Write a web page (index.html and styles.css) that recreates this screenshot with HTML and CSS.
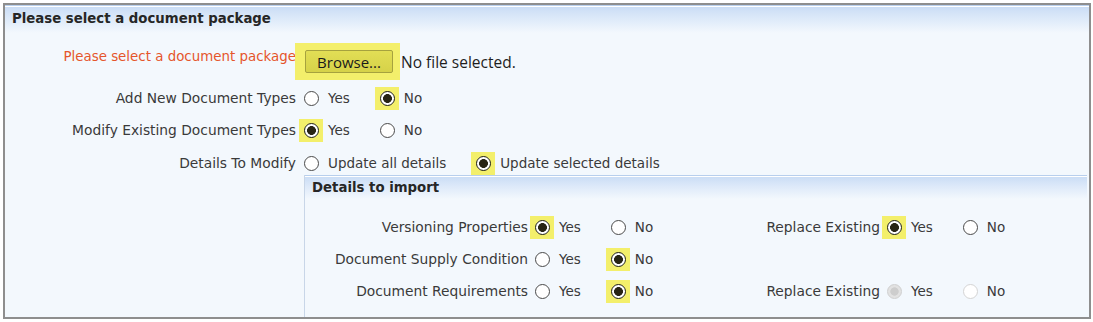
FILE: index.html
```html
<!DOCTYPE html>
<html>
<head>
<meta charset="utf-8">
<link rel="stylesheet" href="styles.css">
</head>
<body>
<div class="frame">
  <div class="hdr">Please select a document package</div>
  <div class="content">
    <div class="row row-file">
      <span class="lbl req">Please select a document package</span>
      <span class="hl hl-btn"><span class="browse">Browse...</span></span>
      <span class="nofile">No file selected.</span>
    </div>
    <div class="row r2">
      <span class="lbl">Add New Document Types</span>
      <span class="opt"><span class="radio"></span>Yes</span>
      <span class="opt"><span class="hl"><span class="radio on"></span></span>No</span>
    </div>
    <div class="row r3">
      <span class="lbl">Modify Existing Document Types</span>
      <span class="opt"><span class="hl"><span class="radio on"></span></span>Yes</span>
      <span class="opt"><span class="radio"></span>No</span>
    </div>
    <div class="row r4">
      <span class="lbl">Details To Modify</span>
      <span class="opt"><span class="radio"></span>Update all details</span>
      <span class="opt"><span class="hl"><span class="radio on"></span></span>Update selected details</span>
    </div>
    <div class="panel">
      <div class="phdr">Details to import</div>
      <div class="pbody">
        <div class="prow">
          <span class="plbl">Versioning Properties</span>
          <span class="popts">
            <span class="opt"><span class="hl"><span class="radio on"></span></span>Yes</span>
            <span class="opt"><span class="radio"></span>No</span>
          </span>
          <span class="plbl2">Replace Existing</span>
          <span class="opt"><span class="hl"><span class="radio on"></span></span>Yes</span>
          <span class="opt"><span class="radio"></span>No</span>
        </div>
        <div class="prow">
          <span class="plbl">Document Supply Condition</span>
          <span class="popts">
            <span class="opt"><span class="radio"></span>Yes</span>
            <span class="opt"><span class="hl"><span class="radio on"></span></span>No</span>
          </span>
        </div>
        <div class="prow">
          <span class="plbl">Document Requirements</span>
          <span class="popts">
            <span class="opt"><span class="radio"></span>Yes</span>
            <span class="opt"><span class="hl"><span class="radio on"></span></span>No</span>
          </span>
          <span class="plbl2">Replace Existing</span>
          <span class="opt"><span class="radio dis on"></span>Yes</span>
          <span class="opt"><span class="radio dis"></span>No</span>
        </div>
      </div>
    </div>
  </div>
</div>
</body>
</html>
```

FILE: styles.css
```css
html, body {
  margin: 0;
  padding: 0;
  background: #ffffff;
}
body {
  font-family: "DejaVu Sans", Verdana, sans-serif;
  font-size: 13.8px;
  color: #3a3a3a;
}
.frame {
  margin: 3px 0 0 3px;
  width: 1088px;
  height: 316px;
  box-sizing: border-box;
  border: 2px solid #8e8e8e;
  background: #f3f8fd;
  display: flex;
  flex-direction: column;
}
.hdr {
  height: 28px;
  box-sizing: border-box;
  border-top: 1px solid #b9d0ee;
  box-shadow: inset 0 1px 0 #ffffff;
  padding: 5px 0 0 7px;
  background: linear-gradient(to bottom, #c9dcf5 0%, #dce9f9 45%, #f3f8fd 100%);
  font-weight: bold;
  font-size: 13.3px;
  color: #262626;
}
.content {
  flex: 1;
  padding-top: 10px;
  display: flex;
  flex-direction: column;
}
.row {
  display: flex;
  align-items: center;
  height: 24px;
}
.row-file {
  height: 37px;
}
.r2 { margin-top: 6px; }
.r3 { margin-top: 8px; }
.r4 { margin-top: 9px; }
.lbl {
  width: 291px;
  flex: none;
  text-align: right;
  margin-right: 8px;
  white-space: nowrap;
}
.req {
  color: #e5552b;
  margin-right: 0;
  font-size: 13.4px;
  align-self: flex-start;
  padding-top: 6px;
}
.hl-btn {
  margin-left: -1px;
  height: 37px;
  padding: 7px 7px 7px 10px;
  box-sizing: border-box;
}
.hl {
  background: #f3ef6b;
  display: inline-flex;
  align-items: center;
}
.browse {
  display: inline-flex;
  align-items: center;
  justify-content: center;
  width: 88px;
  height: 23px;
  box-sizing: border-box;
  border: 1px solid #a6a23e;
  border-radius: 2px;
  background: linear-gradient(to bottom, #e2de55, #d6d249);
  font-family: "Open Sans", "Liberation Sans", sans-serif;
  font-size: 15px;
  color: #1a1a1a;
}
.nofile {
  margin-left: 1px;
  font-family: "Open Sans", "Liberation Sans", sans-serif;
  font-size: 15.5px;
  color: #1e1e1e;
}
.opt {
  display: inline-flex;
  align-items: center;
  margin-right: 30px;
  white-space: nowrap;
  font-size: 13.5px;
}
.opt .hl {
  margin: -5px 5px -5px -5px;
  padding: 4px 4px 4px 5px;
}
.radio {
  width: 15px;
  height: 15px;
  box-sizing: border-box;
  border: 1px solid #4a4a4a;
  border-radius: 50%;
  background: #ffffff;
  margin-right: 9px;
  flex: none;
}
.hl .radio {
  margin-right: 0;
}
.radio.on {
  border: 1.5px solid #1e1e1e;
  background: radial-gradient(circle, #272414 0 4.1px, #ffffff 4.7px);
}
.radio.dis {
  border: 1px solid #d4d4d4;
  background: #ffffff;
}
.radio.dis.on {
  border: 1px solid #cfcfcf;
  background: radial-gradient(circle, #cdcdcd 0 3.8px, #e2e2e2 4.5px);
}
.panel {
  margin: 0 2px 0 299px;
  flex: 1;
  border-left: 1px solid #c8d6e8;
  display: flex;
  flex-direction: column;
}
.phdr {
  height: 24px;
  box-sizing: border-box;
  border-top: 1px solid #b8cfed;
  box-shadow: inset 0 1px 0 #ffffff;
  padding: 4px 0 0 7px;
  background: linear-gradient(to bottom, #c9dcf5 0%, #dde9f9 45%, #f3f8fd 100%);
  font-weight: bold;
  font-size: 13.3px;
  color: #262626;
}
.pbody {
  padding-top: 16px;
  display: flex;
  flex-direction: column;
  gap: 8px;
}
.prow {
  display: flex;
  align-items: center;
  height: 24px;
}
.plbl {
  width: 223px;
  flex: none;
  text-align: right;
  margin-right: 7px;
  white-space: nowrap;
}
.popts {
  width: 205px;
  flex: none;
  display: flex;
  align-items: center;
}
.plbl2 {
  width: 140px;
  flex: none;
  text-align: right;
  margin-right: 7px;
  white-space: nowrap;
}
```
